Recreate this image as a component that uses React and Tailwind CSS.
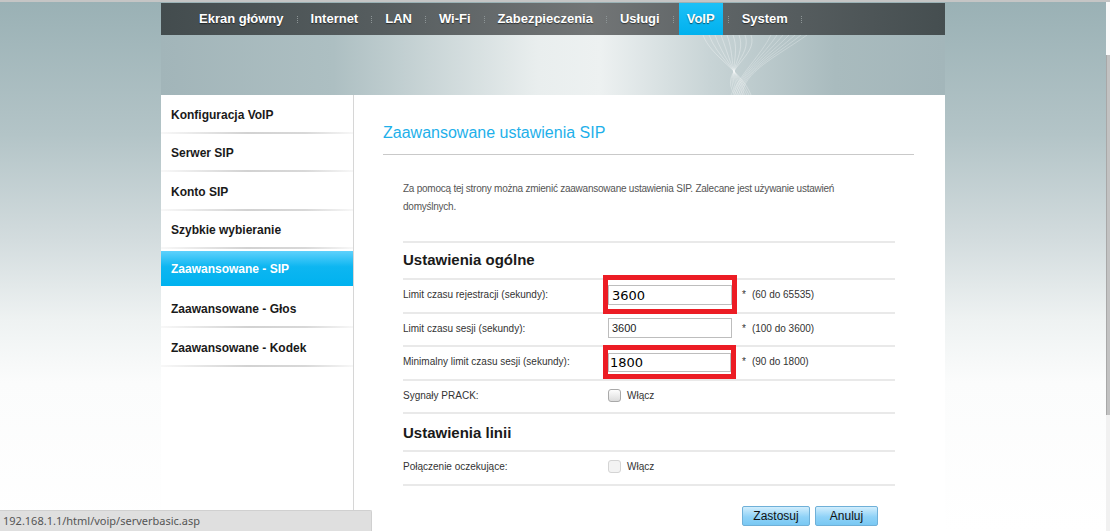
import React from "react";

const navItems = ["Ekran główny", "Internet", "LAN", "Wi-Fi", "Zabezpieczenia", "Usługi", "VoIP", "System"];

const sideItems = [
  "Konfiguracja VoIP",
  "Serwer SIP",
  "Konto SIP",
  "Szybkie wybieranie",
  "Zaawansowane - SIP",
  "Zaawansowane - Głos",
  "Zaawansowane - Kodek",
];

function NavSep() {
  return <span className="mx-[5px] h-[7px] w-px border-l border-dotted border-[#8d9596]" />;
}

function Banner() {
  return (
    <div className="relative h-[60px] bg-[linear-gradient(to_right,#a2b5b9_0%,#adbfc2_22%,#e9eeee_48%,#edf1f1_56%,#c8d4d6_70%,#a9bbbe_86%,#a3b6ba_100%)]">
      {/* wave lines */}
      <svg className="absolute left-[540px] top-0" width="120" height="60" viewBox="0 0 120 60" fill="none">
        {[0, 6, 12, 18, 24, 30, 36, 42, 48].map((d) => (
          <path
            key={"a" + d}
            d={`M${2 + d} 0 C${10 + d} 22 ${40 - d / 2} 35 ${50 - d / 3} 60`}
            stroke="rgba(255,255,255,0.45)"
            strokeWidth="0.7"
          />
        ))}
        {[0, 6, 12, 18, 24, 30, 36].map((d) => (
          <path
            key={"b" + d}
            d={`M${70 + d} 0 C${60 + d / 2} 20 ${40} 38 ${30 + d / 3} 60`}
            stroke="rgba(255,255,255,0.38)"
            strokeWidth="0.7"
          />
        ))}
      </svg>
    </div>
  );
}

function Highlight({ className }) {
  return <span className={`pointer-events-none absolute border-[5px] border-[#ec1c24] ${className}`} />;
}

function Row({ label, children, h = "h-[33.5px]" }) {
  return (
    <div className={`flex items-center border-b-2 border-[#e9e9e9] ${h} pb-[2px]`}>
      <div className="w-[205px] text-[10px] text-[#333]">{label}</div>
      {children}
    </div>
  );
}

function Checkbox({ disabled }) {
  return (
    <span
      className={`inline-block h-[13px] w-[13px] rounded-[3px] border ${
        disabled ? "border-[#d4d4d4] bg-[#f3f3f3]" : "border-[#a9a9a9] bg-[linear-gradient(#fdfdfd,#dcdcdc)]"
      }`}
    />
  );
}

export default function App() {
  return (
    <div className="relative flex h-[531px] w-[1110px] overflow-hidden border-t-2 border-[#c5c5c5] font-['Liberation_Sans',Arial,sans-serif]">
      <div className="flex-1 bg-[linear-gradient(to_bottom,#9ab1b5_0%,#b3c4c7_25%,#d3dcde_45%,#eef2f2_60%,#fbfcfc_72%,#ffffff_100%)] pt-[1px]">
        <div className="mx-auto w-[784px]">
          {/* Top navigation */}
          <div className="flex h-[32px] items-center bg-[linear-gradient(to_right,#434c4e_0%,#565d5f_28%,#727576_55%,#5d6365_72%,#454e50_100%)] pl-[30px]">
            {navItems.map((item, i) => (
              <React.Fragment key={item}>
                {i > 0 && <NavSep />}
                <span
                  className={`flex h-[32px] items-center px-2 text-[13px] font-bold text-white [text-shadow:0_1px_1px_rgba(0,0,0,0.55)] ${
                    item === "VoIP" ? "bg-[linear-gradient(#1cc0f7,#00b1ee)]" : ""
                  }`}
                >
                  {item}
                </span>
              </React.Fragment>
            ))}
            <NavSep />
          </div>

          <Banner />

          {/* Body */}
          <div className="flex h-[436px] bg-white">
            {/* Sidebar */}
            <div className="w-[193px] border-r border-[#d6d6d6]">
              {sideItems.map((item) => {
                const active = item === "Zaawansowane - SIP";
                return (
                  <div key={item} className="relative h-[38.5px]">
                    {active ? (
                      <div className="mt-[2px] flex h-[34.5px] items-center bg-[linear-gradient(#5fd1fc,#0db6f1_45%,#00b2ef)] pl-[10px] pt-[1px] text-[12px] font-bold text-white">
                        {item}
                      </div>
                    ) : (
                      <>
                        <div className="flex h-[36.5px] items-center pl-[10px] pt-[3px] text-[12px] font-bold text-[#1a1a1a]">
                          {item}
                        </div>
                        <div className="h-[2px] bg-[linear-gradient(to_right,rgba(220,220,220,0.2),#d2d2d2_45%,#d8d8d8_75%,rgba(230,230,230,0.3))]" />
                      </>
                    )}
                  </div>
                );
              })}
            </div>

            {/* Content */}
            <div className="flex-1 pl-[29px] pr-[31px]">
              <div className="border-b border-[#c9c9c9] pb-[11px] pt-[28px] text-[16px] leading-[20px] text-[#1eb0ea]">
                Zaawansowane ustawienia SIP
              </div>

              <div className="mt-[25px] pl-[20px] text-[10px] leading-[18px] tracking-[-0.24px] text-[#555]">
                <div className="whitespace-nowrap">
                  Za pomocą tej strony można zmienić zaawansowane ustawienia SIP. Zalecane jest używanie ustawień
                </div>
                <div>domyślnych.</div>
              </div>

              <div className="mt-[25px] pl-[20px] pr-[19px]">
                <div className="border-t-2 border-[#e9e9e9]">
                  <div className="flex h-[37px] items-center border-b-2 border-[#e9e9e9] text-[15px] font-bold text-[#1a1a1a]">
                    Ustawienia ogólne
                  </div>

                  <Row label="Limit czasu rejestracji (sekundy):">
                    <span className="relative">
                      <input
                        readOnly
                        value="3600"
                        className="h-[20px] w-[124px] border border-[#bdbdbd] pl-[3px] font-['DejaVu_Sans',sans-serif] text-[13px] text-black outline-none"
                      />
                      <Highlight className="-bottom-[7px] -left-[5px] -right-[5px] -top-[8px]" />
                    </span>
                    <span className="ml-[10px] text-[10px] text-[#333]">*</span>
                    <span className="ml-[6px] text-[10px] text-[#333]">(60 do 65535)</span>
                  </Row>

                  <Row label="Limit czasu sesji (sekundy):">
                    <input
                      readOnly
                      value="3600"
                      className="h-[20px] w-[124px] border border-[#bdbdbd] pl-[3px] text-[11px] text-[#222] outline-none"
                    />
                    <span className="ml-[10px] text-[10px] text-[#333]">*</span>
                    <span className="ml-[6px] text-[10px] text-[#333]">(100 do 3600)</span>
                  </Row>

                  <Row label="Minimalny limit czasu sesji (sekundy):">
                    <span className="relative">
                      <input
                        readOnly
                        value="1800"
                        className="h-[19px] w-[123px] border border-[#bdbdbd] pl-[1px] font-['DejaVu_Sans',sans-serif] text-[13px] text-black outline-none"
                      />
                      <Highlight className="-inset-[5px]" />
                    </span>
                    <span className="ml-[11px] text-[10px] text-[#333]">*</span>
                    <span className="ml-[6px] text-[10px] text-[#333]">(90 do 1800)</span>
                  </Row>

                  <Row label="Sygnały PRACK:">
                    <Checkbox />
                    <span className="ml-[6px] text-[10px] text-[#333]">Włącz</span>
                  </Row>

                  <div className="flex h-[38px] items-center border-b-2 border-[#e9e9e9] pt-[2px] text-[15px] font-bold text-[#1a1a1a]">
                    Ustawienia linii
                  </div>

                  <Row label="Połączenie oczekujące:">
                    <Checkbox disabled />
                    <span className="ml-[6px] text-[10px] text-[#333]">Włącz</span>
                  </Row>
                </div>

                <div className="mt-[20px] flex justify-end gap-[5px] pr-[17px]">
                  <button className="h-[20px] w-[68px] rounded-[2px] border border-[#6fb0d8] bg-[linear-gradient(#d2eefd,#8fd2f7_55%,#79c8f3)] text-[12px] text-[#111]">
                    Zastosuj
                  </button>
                  <button className="h-[20px] w-[63px] rounded-[2px] border border-[#6fb0d8] bg-[linear-gradient(#d2eefd,#8fd2f7_55%,#79c8f3)] text-[12px] text-[#111]">
                    Anuluj
                  </button>
                </div>
              </div>
            </div>
          </div>
        </div>
      </div>

      {/* Scrollbar */}
      <div className="flex w-[4px] flex-col bg-[#f1f1f1]">
        <div className="h-[53px] bg-[#fafafa]" />
        <div className="h-[360px] border-l border-[#a8a8a8] bg-[#c2c2c2]" />
      </div>

      {/* Browser status bar */}
      <div className="absolute bottom-0 left-0 flex h-[21px] w-[372px] items-center rounded-tr-[2px] border-r border-t border-[#d0d0d0] bg-[#dfdfdf] pl-[3px] font-['Noto_Sans',sans-serif] text-[11px] text-[#555]">
        192.168.1.1/html/voip/serverbasic.asp
      </div>
    </div>
  );
}
